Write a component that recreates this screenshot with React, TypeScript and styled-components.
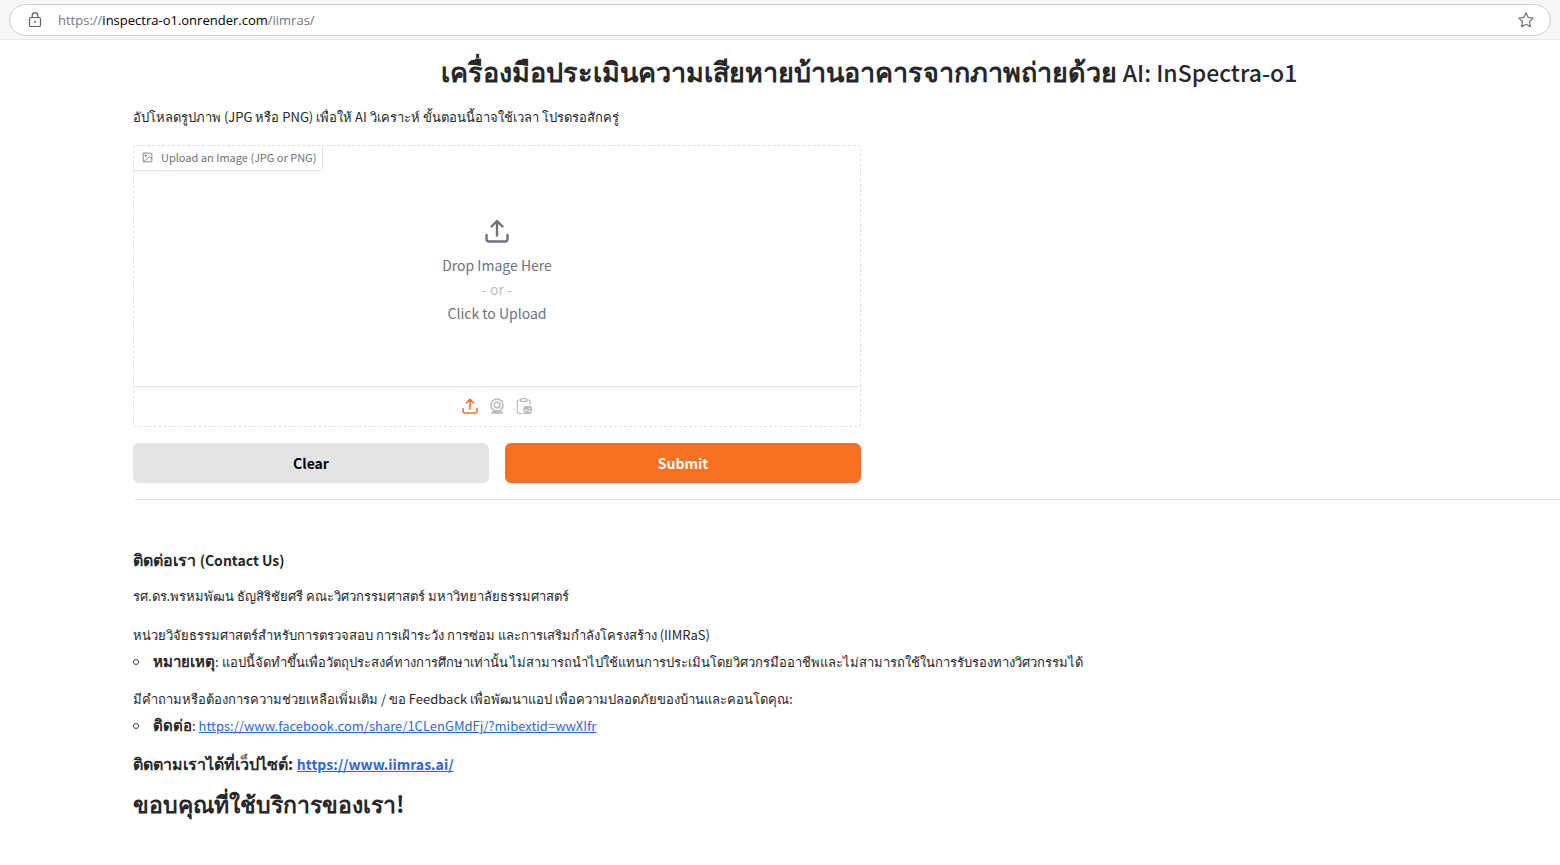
import React from "react";
import styled, { createGlobalStyle } from "styled-components";

const GlobalStyle = createGlobalStyle`
  *, *::before, *::after { box-sizing: border-box; }
  body {
    margin: 0;
    background: #fff;
    color: #27272a;
    font-family: "Noto Sans CJK JP", "Noto Sans", sans-serif;
    font-size: 13px;
    line-height: 20px;
  }
  h1, h2, h3, p, ul { margin: 0; padding: 0; }
`;

const Page = styled.div`
  min-height: 100vh;
  overflow: hidden;
`;

const BrowserBar = styled.header`
  display: flex;
  height: 40px;
  padding: 4px 9px;
  background: #f7f7f7;
  border-bottom: 1px solid #ebebeb;
`;

const AddressPill = styled.div`
  display: flex;
  flex: 1;
  align-items: center;
  height: 32px;
  padding: 0 15px 0 17px;
  background: #fff;
  border: 1px solid #cfcfcf;
  border-radius: 16px;
`;

const Address = styled.a`
  flex: 1;
  margin-left: 15px;
  color: #767676;
  font: 13px/20px "Open Sans", sans-serif;
  text-decoration: none;
`;

const Domain = styled.span`
  color: #000;
`;

const IconButton = styled.button<{ $color: string }>`
  display: flex;
  padding: 0;
  border: 0;
  background: none;
  color: ${(p) => p.$color};
  cursor: pointer;
`;

const Content = styled.main`
  margin-right: -45px;
  padding: 14px 0 40px 133px;
`;

const Title = styled.h1`
  font-size: 27px;
  font-weight: 600;
  line-height: 34px;
  text-align: center;
`;

const Latin = styled.span<{ $size: number; $weight?: number }>`
  font-size: ${(p) => p.$size}px;
  font-weight: ${(p) => p.$weight ?? 600};
  line-height: 1;
`;

const Intro = styled.p`
  margin-top: 19px;
`;

const Columns = styled.div`
  display: grid;
  grid-template-columns: 1fr 1fr;
  gap: 16px;
  margin-top: 18px;
`;

const Form = styled.form`
  display: flex;
  flex-direction: column;
  gap: 16px;
`;

const UploadPanel = styled.section`
  display: flex;
  flex-direction: column;
  height: 282px;
  border: 1px dashed #e0e0e3;
  border-radius: 4px;
`;

const PanelLabel = styled.h2`
  display: flex;
  align-items: center;
  align-self: flex-start;
  gap: 8px;
  height: 25px;
  padding: 0 6px 2px 8px;
  border: 1px solid #e4e4e7;
  border-width: 0 1px 1px 0;
  border-radius: 3px 0 3px 0;
  color: #71717a;
  font-size: 11px;
  font-weight: 400;
`;

const DropZone = styled.button`
  display: flex;
  flex: 1;
  flex-direction: column;
  align-items: center;
  padding: 48px 0 0;
  border: 0;
  background: none;
  color: #71717a;
  font: inherit;
  font-size: 14px;
  line-height: 24px;
  cursor: pointer;
  svg { margin-bottom: 10px; }
`;

const Muted = styled.span`
  color: #bbbbc2;
`;

const Sources = styled.div`
  display: flex;
  align-items: center;
  justify-content: center;
  gap: 11px;
  height: 40px;
  padding-bottom: 2px;
  border-top: 1px solid #e4e4e7;
`;

const Actions = styled.div`
  display: grid;
  grid-template-columns: 1fr 1fr;
  gap: 16px;
`;

const ActionButton = styled.button<{ $primary?: boolean }>`
  height: 40px;
  border: 0;
  border-radius: 6px;
  background: ${(p) => (p.$primary ? "#f77123" : "#e4e4e7")};
  color: ${(p) => (p.$primary ? "#fff" : "#000")};
  font: inherit;
  font-size: 14px;
  font-weight: 600;
  cursor: pointer;
`;

const Divider = styled.hr`
  height: 1px;
  margin: 16px 0 0 2px;
  border: 0;
  background: #e0e0e2;
`;

const Contact = styled.section`
  padding-top: 49px;
`;

const Heading = styled.h3<{ $gap?: number }>`
  margin-top: ${(p) => p.$gap ?? 0}px;
  font-size: 16px;
  font-weight: 600;
  line-height: 20px;
`;

const Closing = styled.h2`
  margin-top: 13px;
  font-size: 23px;
  font-weight: 600;
  line-height: 34px;
`;

const Text = styled.p<{ $gap: number }>`
  margin-top: ${(p) => p.$gap}px;
`;

const Notes = styled.ul`
  margin-top: 7px;
  list-style: none;
`;

const Note = styled.li`
  display: flex;
  align-items: center;
  gap: 14px;
  &::before {
    content: "";
    width: 6px;
    height: 6px;
    border: 1px solid #3f3f46;
    border-radius: 50%;
  }
`;

const Term = styled.strong`
  font-size: 15px;
  line-height: 1;
`;

const Link = styled.a`
  color: #2f66e0;
  text-decoration: underline;
`;

const svgProps = {
  viewBox: "0 0 24 24",
  fill: "none",
  stroke: "currentColor",
  strokeLinecap: "round" as const,
  strokeLinejoin: "round" as const,
  "aria-hidden": true,
};

const LockIcon = () => (
  <svg width="16" height="18" viewBox="0 0 16 18" fill="none" stroke="#5f5f5f" strokeWidth="1.2" aria-hidden>
    <rect x="2.5" y="6.5" width="11" height="9" rx="1.6" />
    <path d="M5.2 6.5V4.4a2.8 2.8 0 0 1 5.6 0v2.1" />
    <circle cx="8" cy="11" r=".9" fill="#5f5f5f" stroke="none" />
  </svg>
);

const StarIcon = () => (
  <svg width="18" height="18" {...svgProps} strokeWidth={1.6}>
    <path d="M12 2.4l2.9 6.1 6.7.9-4.9 4.7 1.2 6.7-5.9-3.2-5.9 3.2 1.2-6.7-4.9-4.7 6.7-.9z" />
  </svg>
);

const UploadIcon = ({ size }: { size: number }) => (
  <svg width={size} height={size} {...svgProps} strokeWidth={2.4}>
    <path d="M1.5 16v4a2.5 2.5 0 0 0 2.5 2.5h16a2.5 2.5 0 0 0 2.5-2.5v-4" />
    <path d="M12 16.5V2.5M6.5 7.5L12 2l5.5 5.5" />
  </svg>
);

const ImageIcon = () => (
  <svg width="11" height="11" {...svgProps} strokeWidth={1.8}>
    <rect x="2.5" y="2.5" width="19" height="19" rx="1.5" />
    <circle cx="8" cy="8" r="1.8" />
    <path d="M21.5 14.5L16 10 4 21" />
  </svg>
);

const WebcamIcon = () => (
  <svg width="16" height="16" {...svgProps} strokeWidth={2.4}>
    <circle cx="12" cy="10.5" r="9" />
    <circle cx="12" cy="10.5" r="4.3" />
    <path d="M6 20.5h12l1.5 2h-15z" fill="currentColor" />
  </svg>
);

const PasteIcon = () => (
  <svg width="16" height="16" {...svgProps} strokeWidth={1.8}>
    <path d="M9 23H4a2 2 0 0 1-2-2V5a2 2 0 0 1 2-2h3M16 3h3a2 2 0 0 1 2 2v5" />
    <path d="M7 5V2.5A1.5 1.5 0 0 1 8.500 1h6A1.500 1.500 0 0 1 16 2.500V5z" />
    <rect x="11" y="12" width="13" height="12" rx="3" fill="currentColor" stroke="none" />
    <path d="M12 21.5l3.5-4 3 3 2-2 3 3" stroke="#fff" strokeWidth={1.4} />
    <circle cx="20" cy="15.5" r="1.2" fill="#fff" stroke="none" />
  </svg>
);

export default function App() {
  return (
    <Page>
      <GlobalStyle />
      <BrowserBar>
        <AddressPill>
          <LockIcon />
          <Address href="#">
            https://<Domain>inspectra-o1.onrender.com</Domain>/iimras/
          </Address>
          <IconButton $color="#777" aria-label="Add to favorites">
            <StarIcon />
          </IconButton>
        </AddressPill>
      </BrowserBar>
      <Content>
        <Title>
          เครื่องมือประเมินความเสียหายบ้านอาคารจากภาพถ่ายด้วย{" "}
          <Latin $size={23} $weight={500}>AI: InSpectra-o1</Latin>
        </Title>
        <Intro>
          อัปโหลดรูปภาพ (JPG หรือ PNG) เพื่อให้ AI วิเคราะห์ ขั้นตอนนี้อาจใช้เวลา โปรดรอสักครู่
        </Intro>
        <Columns>
          <Form onSubmit={(e) => e.preventDefault()}>
            <UploadPanel>
              <PanelLabel>
                <ImageIcon />
                Upload an Image (JPG or PNG)
              </PanelLabel>
              <DropZone type="button">
                <UploadIcon size={24} />
                <span>Drop Image Here</span>
                <Muted>- or -</Muted>
                <span>Click to Upload</span>
              </DropZone>
              <Sources>
                <IconButton type="button" $color="#f77123" aria-label="Upload file">
                  <UploadIcon size={16} />
                </IconButton>
                <IconButton type="button" $color="#bbbbc2" aria-label="Capture from webcam">
                  <WebcamIcon />
                </IconButton>
                <IconButton type="button" $color="#bbbbc2" aria-label="Paste from clipboard">
                  <PasteIcon />
                </IconButton>
              </Sources>
            </UploadPanel>
            <Actions>
              <ActionButton type="reset">Clear</ActionButton>
              <ActionButton type="submit" $primary>
                Submit
              </ActionButton>
            </Actions>
          </Form>
        </Columns>
        <Divider />
        <Contact>
          <Heading>
            ติดต่อเรา <Latin $size={14}>(Contact Us)</Latin>
          </Heading>
          <Text $gap={17}>รศ.ดร.พรหมพัฒน ธัญสิริชัยศรี คณะวิศวกรรมศาสตร์ มหาวิทยาลัยธรรมศาสตร์</Text>
          <Text $gap={19}>
            หน่วยวิจัยธรรมศาสตร์สำหรับการตรวจสอบ การเฝ้าระวัง การซ่อม และการเสริมกำลังโครงสร้าง (IIMRaS)
          </Text>
          <Notes>
            <Note>
              <span>
                <Term>หมายเหตุ</Term>:
                {" แอปนี้จัดทำขึ้นเพื่อวัตถุประสงค์ทางการศึกษาเท่านั้น ไม่สามารถนำไปใช้แทนการประเมินโดยวิศวกรมืออาชีพและไม่สามารถใช้ในการรับรองทางวิศวกรรมได้"}
              </span>
            </Note>
          </Notes>
          <Text $gap={17}>
            มีคำถามหรือต้องการความช่วยเหลือเพิ่มเติม / ขอ Feedback เพื่อพัฒนาแอป เพื่อความปลอดภัยของบ้านและคอนโดคุณ:
          </Text>
          <Notes>
            <Note>
              <span>
                <Term>ติดต่อ</Term>:{" "}
                <Link href="https://www.facebook.com/share/1CLenGMdFj/?mibextid=wwXIfr">
                  https://www.facebook.com/share/1CLenGMdFj/?mibextid=wwXIfr
                </Link>
              </span>
            </Note>
          </Notes>
          <Heading $gap={17}>
            ติดตามเราได้ที่เว็ปไซต์:{" "}
            <Latin $size={14}>
              <Link href="https://www.iimras.ai/">https://www.iimras.ai/</Link>
            </Latin>
          </Heading>
          <Closing>ขอบคุณที่ใช้บริการของเรา!</Closing>
        </Contact>
      </Content>
    </Page>
  );
}
